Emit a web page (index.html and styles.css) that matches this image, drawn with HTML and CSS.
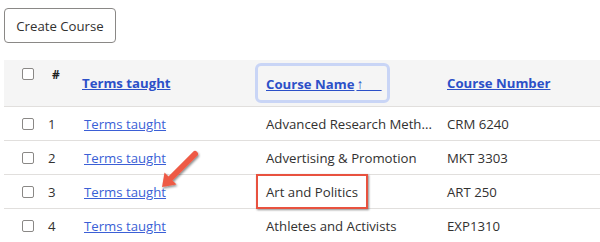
FILE: index.html
```html
<!DOCTYPE html>
<html>
<head>
<meta charset="utf-8">
<link rel="stylesheet" href="styles.css">
</head>
<body>
<div class="page">
  <button class="btn">Create Course</button>
  <div class="table">
    <div class="row head">
      <div class="cell c1"><span class="cb"></span></div>
      <div class="cell c2 hash">#</div>
      <div class="cell c3"><a class="hlink">Terms taught</a></div>
      <div class="cell c4"><span class="focus"><a class="hlink">Course Name<span class="arrow">↑&nbsp;&nbsp;&nbsp;&nbsp;&nbsp;</span></a></span></div>
      <div class="cell c5"><a class="hlink">Course Number</a></div>
    </div>
    <div class="row">
      <div class="cell c1"><span class="cb"></span></div>
      <div class="cell c2">1</div>
      <div class="cell c3"><a class="link">Terms taught</a></div>
      <div class="cell c4">Advanced Research Meth...</div>
      <div class="cell c5">CRM 6240</div>
    </div>
    <div class="row">
      <div class="cell c1"><span class="cb"></span></div>
      <div class="cell c2">2</div>
      <div class="cell c3"><a class="link">Terms taught</a></div>
      <div class="cell c4">Advertising &amp; Promotion</div>
      <div class="cell c5">MKT 3303</div>
    </div>
    <div class="row">
      <div class="cell c1"><span class="cb"></span></div>
      <div class="cell c2">3</div>
      <div class="cell c3 rel"><a class="link">Terms taught</a>
        <svg class="callout" width="50" height="48" viewBox="0 0 50 48">
          <defs>
            <filter id="sh" x="-30%" y="-30%" width="160%" height="160%">
              <feDropShadow dx="1" dy="1.5" stdDeviation="1" flood-color="#000" flood-opacity="0.45"/>
            </filter>
          </defs>
          <g filter="url(#sh)">
            <line x1="37" y1="7" x2="13" y2="31" stroke="#ee5a45" stroke-width="6" stroke-linecap="round"/>
            <polygon points="4,40 6.5,25.5 18.5,37.5" fill="#ee5a45"/>
          </g>
        </svg>
      </div>
      <div class="cell c4 rel">Art and Politics<span class="redbox"></span></div>
      <div class="cell c5">ART 250</div>
    </div>
    <div class="row">
      <div class="cell c1"><span class="cb"></span></div>
      <div class="cell c2">4</div>
      <div class="cell c3"><a class="link">Terms taught</a></div>
      <div class="cell c4">Athletes and Activists</div>
      <div class="cell c5">EXP1310</div>
    </div>
  </div>
</div>
</body>
</html>
```

FILE: styles.css
```css
* { box-sizing: border-box; }
html, body { margin: 0; padding: 0; background: #fff; }
body {
  font-family: "Open Sans", "Noto Sans", sans-serif;
  font-size: 13.2px;
  color: #323130;
  width: 600px;
  height: 242px;
  overflow: hidden;
}
.page { padding: 8px 0 0 4px; }
.btn {
  display: block;
  width: 112px;
  height: 35px;
  border: 1px solid #8a8886;
  border-radius: 4px;
  background: #fff;
  font-family: inherit;
  font-size: 13.2px;
  color: #323130;
  padding: 0;
  margin: 0 0 17px 0;
}
.table { width: 596px; }
.row {
  display: grid;
  grid-template-columns: 36px 34px 181px 182px 1fr;
  height: 34px;
  border-bottom: 1px solid #e1dfdd;
  align-items: stretch;
}
.row.head {
  height: 47px;
  background: #f5f5f5;
}
.cell {
  white-space: nowrap;
  display: flex;
  align-items: center;
}
.rel { position: relative; }
.c1 { padding-left: 18px; }
.c2 { padding-left: 8px; }
.c3 { padding-left: 10px; }
.c4 { padding-left: 11px; }
.c5 { padding-left: 10px; }
.cb {
  display: block;
  width: 12px;
  height: 12px;
  border: 1px solid #8a8886;
  border-radius: 2px;
  background: #fff;
}
.head .c1 { align-items: flex-start; padding-top: 8px; }
.head .hash {
  align-items: flex-start;
  padding-top: 6px;
  padding-left: 12px;
  font-weight: 700;
  font-size: 12px;
  color: #201f1e;
}
.head .c3 { padding-left: 8px; }
.head .c4 { padding-left: 0; align-items: flex-start; }
.hlink {
  color: #2c50c8;
  font-weight: 700;
  text-decoration: underline;
}
.link {
  color: #3b5fd6;
  text-decoration: underline;
}
.focus {
  display: flex;
  align-items: center;
  margin-top: 3px;
  padding-left: 8px;
  border: 3px solid #c9d5f6;
  border-radius: 6px;
  width: 135px;
  height: 40px;
}
.arrow { font-weight: 400; font-size: 14px; padding-left: 2px; }
.redbox {
  position: absolute;
  left: 1px;
  top: -1px;
  width: 112px;
  height: 35px;
  border: 2px solid #e8523f;
  box-shadow: 1px 1px 2px rgba(0,0,0,0.45);
}
.callout {
  position: absolute;
  left: 84px;
  top: -28px;
}
```
